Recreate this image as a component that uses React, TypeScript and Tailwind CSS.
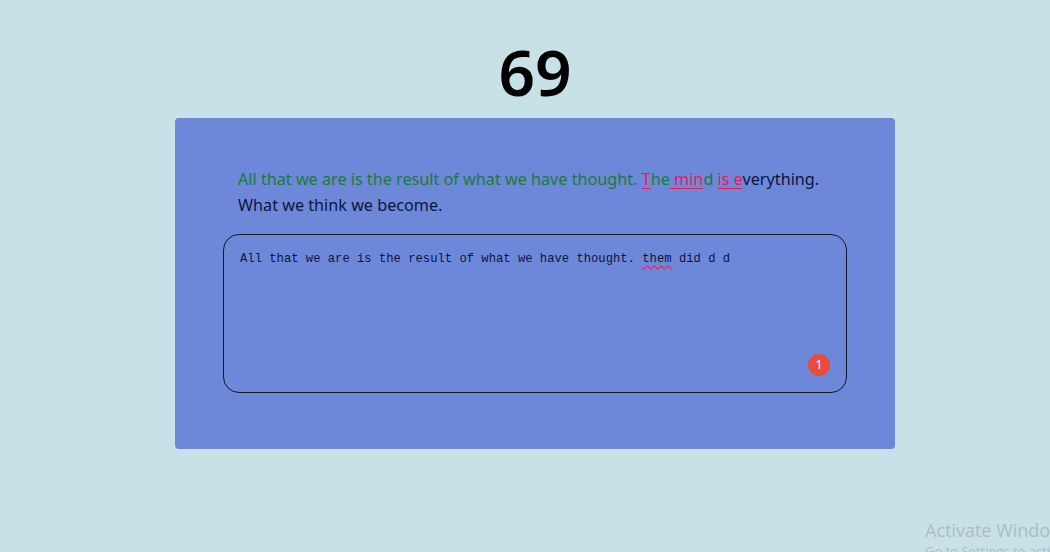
export default function App() {
  return (
    <div className="relative min-h-[552px] w-full overflow-hidden bg-[#c8e1e6] font-['Noto_Sans',sans-serif]">
      <div className="flex flex-col items-center pt-[30px] pl-[20px]">
        <h1 className="text-[64px] font-semibold leading-[84px] text-black">69</h1>
        <div className="mt-[4px] w-[720px] rounded-[4px] bg-[#6d88d9] px-12 pt-[48px] pb-[56px]">
          <p className="px-[15px] text-[16.2px] leading-[26px] text-[#0d1440]">
            <span className="text-[#1c7a3a]">
              All that we are is the result of what we have thought.{" "}
            </span>
            <span className="text-[#e11d5c] underline underline-offset-[3px]">T</span>
            <span className="text-[#1c7a3a]">he</span>
            <span className="text-[#e11d5c] underline underline-offset-[3px]"> min</span>
            <span className="text-[#1c7a3a]">d</span>{" "}
            <span className="text-[#e11d5c] underline underline-offset-[3px]">is e</span>
            <span>verything. What we think we become.</span>
          </p>
          <div className="relative mt-[16px] h-[159px] rounded-[16px] border border-[#111827] px-[16px] pt-[16px]">
            <p className="font-['Liberation_Mono',monospace] text-[12.2px] leading-[16px] text-[#0d1440]">
              All that we are is the result of what we have thought.{" "}
              <span className="underline decoration-wavy decoration-[#e0245e] underline-offset-[3px]">them</span>{" "}
              did d d
            </p>
            <span className="absolute right-[16px] bottom-[16px] flex h-[22px] w-[22px] items-center justify-center rounded-full bg-[#e74c3c] text-[13px] text-white">
              1
            </span>
          </div>
        </div>
      </div>
      <div className="absolute left-[925px] top-[518px] whitespace-nowrap font-['Open_Sans',sans-serif] text-[#a9bfc4]">
        <div className="text-[18px] leading-[24px]">Activate Windows</div>
        <div className="text-[13px] leading-[18px]">Go to Settings to activate Windows.</div>
      </div>
    </div>
  );
}
